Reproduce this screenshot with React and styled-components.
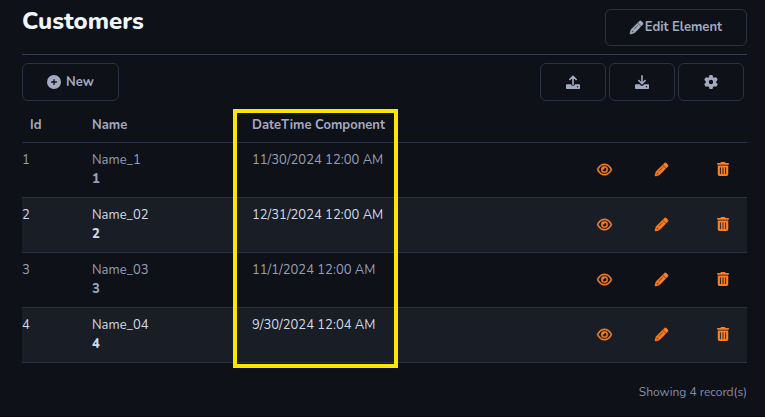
import React from 'react';
import styled, { createGlobalStyle } from 'styled-components';
import { FaCirclePlus, FaGear, FaPencil, FaRegEye, FaTrashCan } from 'react-icons/fa6';

const GlobalStyle = createGlobalStyle`
  *, *::before, *::after { box-sizing: border-box; }
  body {
    margin: 0;
    background: #0e1118;
    color: #979fb5;
    font-family: Nunito, "Noto Sans", sans-serif;
    font-size: 13px;
    line-height: 19px;
  }
`;

const Page = styled.main`
  padding: 9px 18px 14px 22px;
  border-bottom: 1px solid #0b0910;
`;

const Header = styled.header`
  display: flex;
  align-items: flex-start;
  justify-content: space-between;
  padding-bottom: 8px;
  border-bottom: 1px solid #373c50;
`;

const Title = styled.h1`
  margin: 0;
  color: #f1f5fa;
  font-size: 24px;
  font-weight: 800;
  line-height: 24px;
`;

const Button = styled.button`
  display: inline-flex;
  align-items: center;
  justify-content: center;
  gap: ${(p) => p.$gap || 0}px;
  height: ${(p) => p.$height || 38}px;
  padding: 0 ${(p) => p.$pad || 24}px;
  border: 1px solid #2d3144;
  border-radius: 6px;
  background: transparent;
  color: #a3abc0;
  font: inherit;
  font-weight: 700;
  cursor: pointer;

  svg { display: block; }
`;

const Toolbar = styled.div`
  display: flex;
  justify-content: space-between;
  padding: 8px 3px 6px 0;
`;

const ButtonGroup = styled.div`
  display: flex;
  gap: 3px;
`;

const TableArea = styled.div`
  position: relative;
`;

const Table = styled.table`
  width: 100%;
  table-layout: fixed;
  border-collapse: collapse;
`;

const Col = styled.col`
  width: ${(p) => p.$width}px;
`;

const HeadCell = styled.th`
  height: 35px;
  padding: 2px 8px 0;
  border-bottom: 1px solid #2d3144;
  color: #a3abc0;
  font-weight: 700;
  text-align: left;
  white-space: nowrap;
`;

const Row = styled.tr`
  height: 55px;
  border-bottom: 1px solid #2d3144;

  &:nth-child(even) {
    background: #191d26;
    color: #d3d9e5;
  }
`;

const Cell = styled.td`
  padding: ${(p) => (p.$flush ? '8px 8px 8px 0' : '8px')};
  vertical-align: top;
  white-space: nowrap;
`;

const ActionCell = styled.td`
  padding: 0 8px 1px;
  vertical-align: middle;
`;

const Count = styled.strong`
  display: block;
  font-weight: 800;
`;

const IconButton = styled.button`
  display: block;
  padding: 0;
  border: 0;
  background: transparent;
  color: #fd7e20;
  cursor: pointer;

  svg { display: block; }
`;

const EyeIcon = styled(FaRegEye)`
  overflow: visible;
  stroke: currentColor;
  stroke-width: 14;
`;

const PencilIcon = styled(FaPencil)`
  overflow: visible;
  stroke: currentColor;
  stroke-width: 26;
`;

const Highlight = styled.div`
  position: absolute;
  top: 2px;
  bottom: -5px;
  left: 211px;
  width: 165px;
  border: 4px solid #ffe600;
  pointer-events: none;
`;

const Footer = styled.footer`
  padding-top: 20px;
  color: #868ea6;
  font-size: 12px;
  text-align: right;
`;

function TransferIcon({ down }) {
  return (
    <svg width="14" height="14" viewBox="0 0 14 14" fill="none" aria-hidden="true">
      <path
        d={down ? 'M7 .8v7.700M3.800 5.500 7 8.700l3.200-3.200' : 'M7 9.500v-8M3.800 4.500 7 1.300l3.200 3.200'}
        stroke="currentColor"
        strokeWidth="1.6"
        strokeLinecap="round"
        strokeLinejoin="round"
      />
      <path
        fill="currentColor"
        fillRule="evenodd"
        d="M1 9.300h3.900L6 10.700h2l1.100-1.400H13c.6 0 1 .4 1 1V13c0 .6-.4 1-1 1H1c-.6 0-1-.4-1-1v-2.700c0-.6.4-1 1-1ZM11.500 11a.7.7 0 1 0 0 1.400.7.7 0 0 0 0-1.400Z"
      />
    </svg>
  );
}

const records = [
  { id: 1, name: 'Name_1', date: '11/30/2024 12:00 AM' },
  { id: 2, name: 'Name_02', date: '12/31/2024 12:00 AM' },
  { id: 3, name: 'Name_03', date: '11/1/2024 12:00 AM' },
  { id: 4, name: 'Name_04', date: '9/30/2024 12:04 AM' },
];

export default function App() {
  return (
    <>
      <GlobalStyle />
      <Page>
        <Header>
          <Title>Customers</Title>
          <Button type="button" $gap={2} $height={37}>
            <PencilIcon size={13} /> Edit Element
          </Button>
        </Header>
        <Toolbar>
          <Button type="button" $gap={5}>
            <FaCirclePlus size={14} /> New
          </Button>
          <ButtonGroup>
            <Button type="button" $pad={25} aria-label="Import"><TransferIcon /></Button>
            <Button type="button" $pad={25} aria-label="Export"><TransferIcon down /></Button>
            <Button type="button" $pad={25} aria-label="Settings"><FaGear size={14} /></Button>
          </ButtonGroup>
        </Toolbar>
        <TableArea>
          <Table>
            <colgroup>
              <Col $width={62} />
              <Col $width={160} />
              <col />
              <Col $width={58} />
              <Col $width={61} />
              <Col $width={39} />
            </colgroup>
            <thead>
              <tr>
                <HeadCell scope="col">Id</HeadCell>
                <HeadCell scope="col">Name</HeadCell>
                <HeadCell scope="col">DateTime Component</HeadCell>
                <HeadCell as="td" colSpan={3} />
              </tr>
            </thead>
            <tbody>
              {records.map((r) => (
                <Row key={r.id}>
                  <Cell $flush>{r.id}</Cell>
                  <Cell>
                    {r.name}
                    <Count>{r.id}</Count>
                  </Cell>
                  <Cell>{r.date}</Cell>
                  <ActionCell>
                    <IconButton type="button" aria-label={`View ${r.name}`}><EyeIcon size={15} /></IconButton>
                  </ActionCell>
                  <ActionCell>
                    <IconButton type="button" aria-label={`Edit ${r.name}`}><PencilIcon size={13} /></IconButton>
                  </ActionCell>
                  <ActionCell>
                    <IconButton type="button" aria-label={`Delete ${r.name}`}><FaTrashCan size={14} /></IconButton>
                  </ActionCell>
                </Row>
              ))}
            </tbody>
          </Table>
          <Highlight />
        </TableArea>
        <Footer>Showing 4 record(s)</Footer>
      </Page>
    </>
  );
}
